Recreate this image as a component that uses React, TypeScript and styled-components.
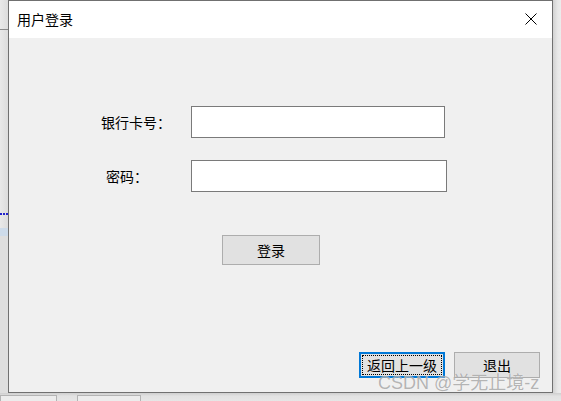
import React from "react";
import styled, { createGlobalStyle } from "styled-components";

const Global = createGlobalStyle`
  html, body { margin: 0; padding: 0; background: #e4e4e4; }
  body { font-family: "Noto Sans CJK SC", "Noto Sans", sans-serif; }
`;

const Desktop = styled.div`
  position: relative;
  width: 561px;
  height: 401px;
  overflow: hidden;
  display: grid;
  grid-template-columns: 8px 545px 8px;
  grid-template-rows: 393px 8px;
  background: #e4e4e4;
`;

const LeftStrip = styled.div`
  display: flex;
  flex-direction: column;
  background: linear-gradient(to right, #e9e9e9, #dcdcdc);
`;

const StripPiece = styled.div<{ $h: number; $bg?: string; $line?: string }>`
  height: ${(p) => p.$h}px;
  flex: none;
  background: ${(p) => p.$bg || "transparent"};
  border-bottom: ${(p) => p.$line || "none"};
`;

const RightStrip = styled.div`
  background: linear-gradient(to right, #d2d2d2, #e8e8e8 60%, #ececec);
`;

const BottomStrip = styled.div`
  grid-column: 1 / span 3;
  display: flex;
  align-items: flex-start;
  gap: 20px;
  padding-left: 0;
  background: linear-gradient(to bottom, #cfcfcf, #e2e2e2 40%, #e6e6e6);
`;

const BottomBox = styled.div<{ $w: number }>`
  width: ${(p) => p.$w}px;
  height: 8px;
  margin-top: 2px;
  border: 1px solid #b4b4b4;
  border-bottom: none;
  background: #ececec;
`;

const Window = styled.div`
  display: flex;
  flex-direction: column;
  border: 1px solid #707070;
  background: #f0f0f0;
`;

const TitleBar = styled.div`
  height: 37px;
  flex: none;
  display: flex;
  align-items: center;
  justify-content: space-between;
  background: #ffffff;
  padding: 0 15px 0 8px;
`;

const Title = styled.span`
  font-size: 14px;
  color: #000;
  line-height: 1;
  margin-top: -1px;
`;

const CloseIcon = styled.svg`
  width: 12px;
  height: 12px;
  margin-top: -1px;
`;

const Content = styled.div`
  flex: 1;
  display: flex;
  flex-direction: column;
  padding: 68px 12px 14px 92px;
`;

const Form = styled.div`
  display: grid;
  grid-template-columns: 90px auto;
  row-gap: 22px;
  align-items: center;
  justify-items: start;
`;

const Label = styled.label<{ $indent: number }>`
  font-size: 14px;
  color: #000;
  padding-left: ${(p) => p.$indent}px;
  letter-spacing: 0;
`;

const Field = styled.input<{ $w: number }>`
  box-sizing: border-box;
  width: ${(p) => p.$w}px;
  height: 32px;
  border: 1px solid #7a7a7a;
  background: #fff;
  padding: 0 4px;
  font-size: 14px;
  outline: none;
`;

const LoginRow = styled.div`
  margin-top: 43px;
  padding-left: 121px;
`;

const Button = styled.button<{ $w: number; $h: number; $focused?: boolean }>`
  position: relative;
  box-sizing: border-box;
  width: ${(p) => p.$w}px;
  height: ${(p) => p.$h}px;
  background: #e1e1e1;
  border: ${(p) => (p.$focused ? "2px solid #0078d7" : "1px solid #adadad")};
  font-family: "Noto Sans CJK SC", sans-serif;
  font-size: 14px;
  color: #000;
  padding: 0;
  line-height: 1;
  &::after {
    content: "";
    display: ${(p) => (p.$focused ? "block" : "none")};
    position: absolute;
    inset: 1px;
    border: 1px dotted #000;
  }
`;

const Spacer = styled.div`
  flex: 1;
`;

const ActionRow = styled.div`
  display: flex;
  justify-content: flex-end;
  gap: 9px;
`;

const Watermark = styled.div`
  position: absolute;
  left: 378px;
  top: 368px;
  font-family: "Liberation Sans", "Noto Sans CJK SC", sans-serif;
  font-size: 18px;
  color: rgba(120, 120, 120, 0.55);
  text-shadow: 0 0 1px rgba(255, 255, 255, 0.8);
  white-space: nowrap;
  pointer-events: none;
`;

export default function App() {
  return (
    <>
      <Global />
      <Desktop>
        <LeftStrip>
          <StripPiece $h={29} $line="1px solid #8a8a8a" />
          <StripPiece $h={183} $line="2px dotted #2222cc" />
          <StripPiece $h={13} />
          <StripPiece $h={8} $bg="#cddbea" />
          <StripPiece $h={160} $bg="#dedede" />
        </LeftStrip>
        <Window>
          <TitleBar>
            <Title>用户登录</Title>
            <CloseIcon viewBox="0 0 12 12">
              <path d="M0.5 0.5 L11.5 11.5 M11.5 0.5 L0.5 11.5" stroke="#000" strokeWidth="1" fill="none" />
            </CloseIcon>
          </TitleBar>
          <Content>
            <Form>
              <Label $indent={0}>银行卡号：</Label>
              <Field $w={254} />
              <Label $indent={5}>密码：</Label>
              <Field $w={256} />
            </Form>
            <LoginRow>
              <Button $w={98} $h={30}>登录</Button>
            </LoginRow>
            <Spacer />
            <ActionRow>
              <Button $w={86} $h={26} $focused>返回上一级</Button>
              <Button $w={86} $h={26}>退出</Button>
            </ActionRow>
          </Content>
        </Window>
        <RightStrip />
        <BottomStrip>
          <BottomBox $w={55} />
          <BottomBox $w={62} />
        </BottomStrip>
        <Watermark>CSDN @学无止境-z</Watermark>
      </Desktop>
    </>
  );
}
